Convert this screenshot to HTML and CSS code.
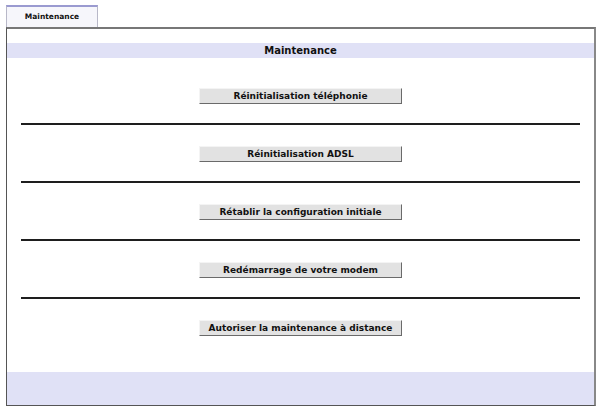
FILE: index.html
```html
<!DOCTYPE html>
<html>
	<head>
		<meta charset="utf-8" />
		<title>Maintenance</title>
		<link rel="stylesheet" href="styles.css">
	</head>
	<body>
		<div class="tabs">
			<div class="tab active">Maintenance</div>
		</div>

		<div class="panel">
			<div class="panel-title">Maintenance</div>

			<div class="actions">
				<div class="action first">
					<button class="btn">Réinitialisation téléphonie</button>
				</div>
				<hr class="sep">
				<div class="action">
					<button class="btn">Réinitialisation ADSL</button>
				</div>
				<hr class="sep">
				<div class="action">
					<button class="btn">Rétablir la configuration initiale</button>
				</div>
				<hr class="sep">
				<div class="action">
					<button class="btn">Redémarrage de votre modem</button>
				</div>
				<hr class="sep">
				<div class="action last">
					<button class="btn">Autoriser la maintenance à distance</button>
				</div>
			</div>

			<div class="panel-footer"></div>
		</div>
	</body>
</html>
```

FILE: styles.css
```css
body {
	margin: 0;
	padding: 5px 2px 0 6px;
	font-family: "DejaVu Sans", Verdana, sans-serif;
	background: #fff;
	color: #111;
}
.tabs {
	display: flex;
	height: 22px;
}
.tab {
	width: 90px;
	border: 1px solid #b8b8c8;
	border-top: 2px solid #9a9ad0;
	border-bottom: none;
	background: #f6f6fb;
	font-size: 7.5px;
	font-weight: bold;
	text-align: center;
	line-height: 20px;
}
.panel {
	width: 587px;
	height: 376px;
	border: 1px solid #555;
	border-top: 2px solid #777;
	border-right: 2px solid #888;
	display: flex;
	flex-direction: column;
}
.panel-title {
	margin-top: 14px;
	height: 15px;
	line-height: 15px;
	background: #e0e1f6;
	text-align: center;
	font-size: 10px;
	font-weight: bold;
}
.actions {
	flex: 1;
	padding: 0 14px;
}
.action {
	display: flex;
	justify-content: center;
	padding: 21px 0 19px;
}
.action.first {
	padding-top: 30px;
}
.btn {
	width: 203px;
	height: 16px;
	padding: 0;
	background: #e2e2e2;
	border: 1px solid #f4f4f4;
	border-right-color: #6a6a6a;
	border-bottom-color: #6a6a6a;
	font-family: "DejaVu Sans", Verdana, sans-serif;
	font-size: 9px;
	font-weight: bold;
	color: #111;
}
.sep {
	margin: 0;
	border: none;
	height: 2px;
	background: #1e1e1e;
}
.panel-footer {
	height: 33px;
	background: #e0e1f6;
}
```
